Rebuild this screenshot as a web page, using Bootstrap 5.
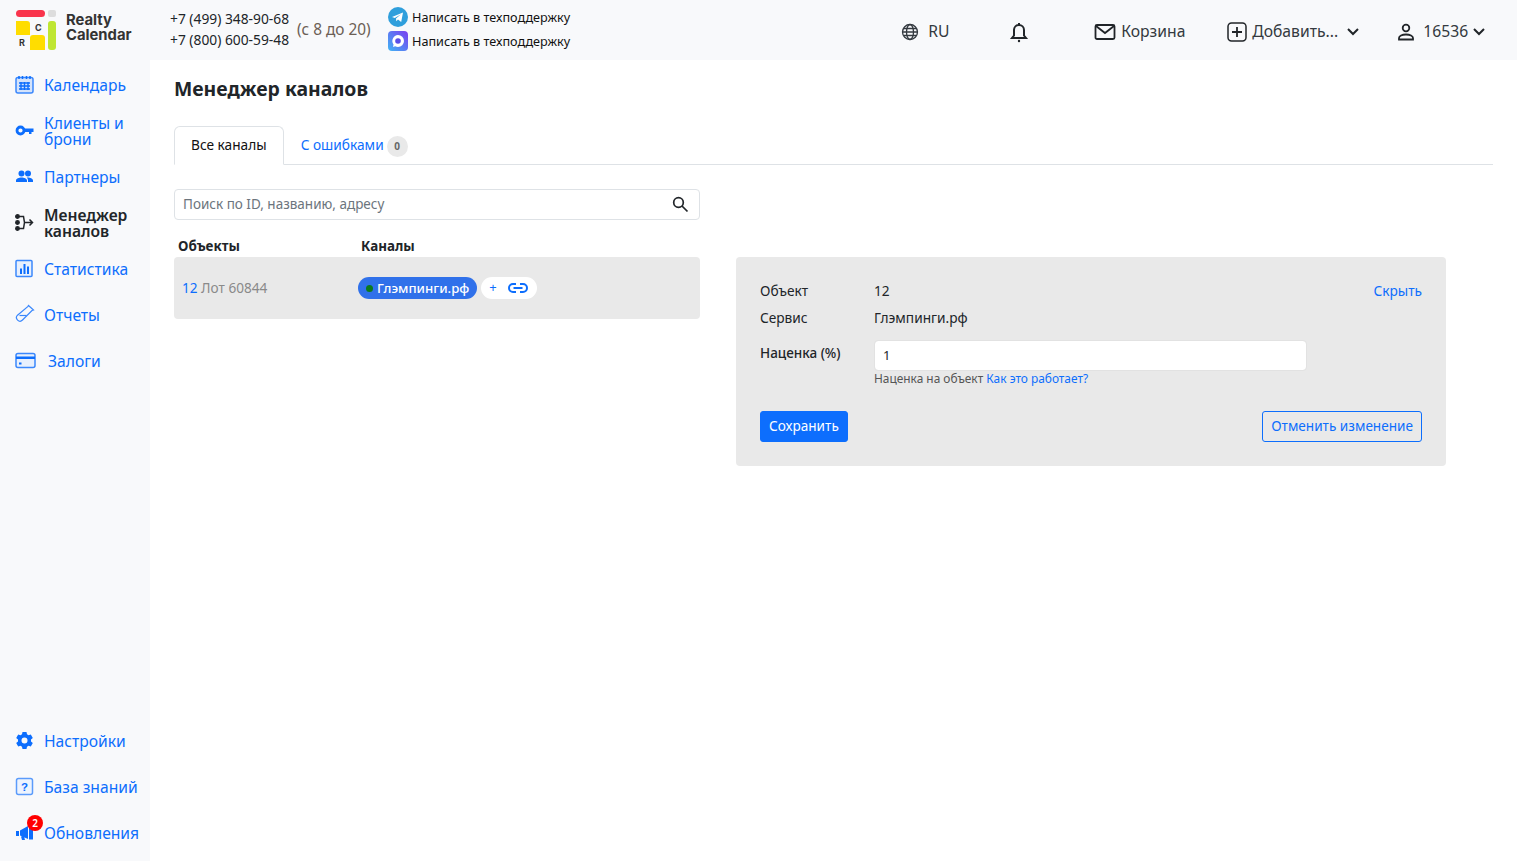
<!DOCTYPE html>
<html lang="ru">
  <head>
    <meta charset="UTF-8" />
    <meta name="viewport" content="width=device-width, initial-scale=1.0" />
    <title>Менеджер каналов</title>
    <link href="https://cdn.jsdelivr.net/npm/bootstrap@5.3.3/dist/css/bootstrap.min.css" rel="stylesheet" crossorigin="anonymous" />
    <style>
      html, body { height: 100%; }
      body { font-family: "Noto Sans", sans-serif; font-size: 14px; color: #212529; height: 861px; overflow: hidden; }
      a { text-decoration: none; }

      .top-bar { height: 60px; background: #f8f9fb; padding-left: 15px; }
      .logo-text { font-family: "Inter", sans-serif; font-weight: 700; font-size: 14.8px; line-height: 15px; color: #333; margin: 0 0 5px 10px; width: 104px; }
      .phones { font-size: 13.8px; line-height: 21px; color: #212529; white-space: nowrap; width: 119px; margin-bottom: 2px; }
      .work-time { font-size: 15.4px; color: #6c5f55; margin-left: 8px; width: 91px; }
      .support { font-size: 12.65px; line-height: 24px; color: #111; white-space: nowrap; margin-bottom: 2px; }
      .support svg { margin-right: 4px; }
      .top-item { position: absolute; top: 2px; height: 60px; display: flex; align-items: center; font-size: 15.7px; color: #343a40; white-space: nowrap; }
      .top-holder { position: relative; flex-grow: 1; height: 60px; }

      .side-bar { width: 150px; height: 801px; background: #f8f9fb; padding: 1.5px 0 5.5px; flex-shrink: 0; }
      .side-link { height: 46px; display: flex; align-items: center; padding-left: 15px; color: #0d6efd; font-size: 15.65px; line-height: 16px; position: relative; white-space: nowrap; }
      .side-link svg { width: 19px; height: 19px; flex-shrink: 0; margin-right: 10px; }
      .side-link.active-link { color: #212529; font-weight: 600; }
      .deposit-link svg { width: 21px; margin-right: 12px; }
      .alert-count { position: absolute; left: 27px; top: 5px; width: 16px; height: 16px; border-radius: 50%; background: #f00; color: #fff; font-size: 10px; font-weight: 600; line-height: 16px; text-align: center; }

      .main-area { padding: 0 24px; min-width: 0; }
      .page-title { font-size: 19.4px; font-weight: 700; line-height: 24px; margin: 17px 0 25px; }
      .nav-tabs .nav-link { font-size: 13.7px; padding: 0 16px; height: 39px; line-height: 36px; }
      .nav-tabs .nav-link.active { color: #111; }
      .error-tab { color: #0d6efd; padding-right: 0 !important; }
      .error-count { display: inline-block; width: 21px; height: 21px; border-radius: 50%; background: #e9e9e9; color: #666; font-size: 10px; font-weight: 700; line-height: 21px; text-align: center; margin-left: 3px; vertical-align: 0; }

      .left-col { width: 526px; flex-shrink: 0; }
      .search-box { height: 31px; margin-top: 24px; }
      .search-box .form-control { height: 31px; font-size: 13.5px; padding: 0 40px 2px 8px; border-radius: 4px; }
      .search-box .form-control::placeholder { color: #6c757d; opacity: 1; }
      .search-box svg { position: absolute; right: 11px; top: 7px; }
      .col-heads { height: 37px; font-size: 13.4px; font-weight: 700; line-height: 16px; padding: 18px 0 0 4px; color: #212529; }
      .col-heads span:first-child { width: 183px; }
      .object-row { height: 62px; background: #e9e9e9; border-radius: 4px; padding-left: 8px; font-size: 13.6px; color: #8a8a8a; }
      .object-cell { width: 176px; }
      .channel-pill { height: 22px; border-radius: 11px; background: #3071ea; color: #fff; font-size: 13.2px; font-weight: 500; padding: 0 8px; line-height: 22px; }
      .green-dot { width: 7px; height: 7px; border-radius: 50%; background: #0b7a1c; margin-right: 4px; }
      .add-pill { height: 22px; width: 56px; border-radius: 11px; background: #fff; color: #0d6efd; margin-left: 4px; padding-left: 8px; font-size: 13px; }
      .add-pill svg { margin-left: 11px; }

      .edit-panel { width: 710px; height: 209px; margin: 92px 0 0 36px; background: #e9e9e9; border-radius: 4px; padding: 24px; font-size: 13.7px; position: relative; }
      .field-row { min-height: 27px; line-height: 20px; }
      .markup-row { margin-top: 5px; }
      .field-label { width: 114px; flex-shrink: 0; }
      .markup-row .field-label { margin-top: 3px; font-size: 13.5px; }
      .hide-link { position: absolute; right: 24px; top: 24px; line-height: 20px; }
      .edit-panel .form-control { width: 433px; height: 31px; font-size: 13px; padding: 0 8px 2px; border-radius: 4px; border-color: #e2e2e2; }
      .hint-text { font-size: 11.9px; line-height: 14px; color: #555; margin: 0 0 0 114px; }
      .panel-buttons { margin-top: 26px; }
      .panel-buttons .btn { height: 31px; font-size: 13.6px; padding: 0 8px 2px; border-radius: 3px; line-height: 27px; }
    </style>
  </head>
  <body>
    <header class="top-bar d-flex align-items-center">
      <svg width="41" height="40" viewBox="0 8 41 40" class="flex-shrink-0">
        <rect x="1" y="8" width="29" height="7" rx="3.500" fill="#f9344c" />
        <rect x="33" y="8" width="8" height="7" rx="2" fill="#ddd" />
        <path d="M1 19h11a3 3 0 0 1 3 3v11H1z" fill="#ffdd00" />
        <path d="M15 48V36a3 3 0 0 1 3-3h9a3 3 0 0 1 3 3v12z" fill="#ffdd00" />
        <rect x="33" y="19" width="8" height="29" rx="3" fill="#bfe632" />
        <text x="20" y="29" font-family="Inter, sans-serif" font-size="9" font-weight="700" fill="#333">C</text>
        <text x="4" y="44" font-family="Inter, sans-serif" font-size="9" font-weight="700" fill="#333">R</text>
      </svg>
      <div class="logo-text">Realty<br />Calendar</div>
      <div class="phones">+7 (499) 348-90-68<br />+7 (800) 600-59-48</div>
      <div class="work-time">(с 8 до 20)</div>
      <div class="support">
        <div class="d-flex align-items-center">
          <svg width="20" height="20" viewBox="0 0 20 20"><circle cx="10" cy="10" r="10" fill="#2f9fdc" /><path d="M4 10l11-4.500-1.800 9.500-3.200-2.400-1.700 1.600-.3-2.700 5-4.300-6.200 3.700z" fill="#fff" /></svg>Написать в техподдержку
        </div>
        <div class="d-flex align-items-center">
          <svg width="20" height="20" viewBox="0 0 20 20"><defs><linearGradient id="maxGrad" x1="0" y1="1" x2="1" y2="0"><stop offset="0" stop-color="#3fb5f5" /><stop offset="1" stop-color="#7b3cf0" /></linearGradient></defs><rect width="20" height="20" rx="4" fill="url(#maxGrad)" /><path d="M10 4a6 6 0 0 1 0 12c-1 0-2-.3-2.800-.8L5 16l.5-2.500A6 6 0 0 1 10 4z" fill="#fff" /><circle cx="10" cy="10" r="2.800" fill="#5a4de8" /></svg>Написать в техподдержку
        </div>
      </div>
      <div class="top-holder">
        <div class="top-item" style="left: 331px">
          <svg width="18" height="18" viewBox="0 0 18 18" fill="none" stroke="#343a40" stroke-width="1.300" style="margin-right: 9px"><circle cx="9" cy="9" r="7.500" /><ellipse cx="9" cy="9" rx="3.500" ry="7.500" /><path d="M1.500 9h15M2.500 5.500h13M2.500 12.500h13" /></svg>RU
        </div>
        <div class="top-item" style="left: 439px">
          <svg width="20" height="22" viewBox="0 0 20 22" fill="none" stroke="#212529" stroke-width="2"><path d="M3 17h14l-2-2.500V9a5 5 0 0 0-10 0v5.500z" /><path d="M10 2v2" /><circle cx="10" cy="20" r="1.200" fill="#212529" stroke="none" /></svg>
        </div>
        <div class="top-item" style="left: 524px">
          <svg width="22" height="18" viewBox="0 0 22 18" fill="none" stroke="#212529" stroke-width="1.800" style="margin-right: 5px"><rect x="1.500" y="2" width="19" height="14" rx="1.500" /><path d="M2 3l9 7 9-7" /></svg>Корзина
        </div>
        <div class="top-item" style="left: 657px">
          <svg width="20" height="20" viewBox="0 0 20 20" fill="none" stroke="#212529" stroke-width="1.500" style="margin-right: 5px"><rect x="1" y="1" width="18" height="18" rx="3.500" /><path d="M10 5v10M5 10h10" stroke-width="1.800" /></svg>Добавить...
          <svg class="ms-2" width="14" height="10" viewBox="0 0 14 10" fill="none" stroke="#212529" stroke-width="2"><path d="M2 2l5 5 5-5" /></svg>
        </div>
        <div class="top-item" style="left: 827px">
          <svg class="me-2" width="18" height="18" viewBox="0 0 18 18" fill="none" stroke="#212529" stroke-width="1.800"><circle cx="9" cy="5" r="3.300" /><path d="M2 16.500v-1.500c0-2 3-3.500 7-3.500s7 1.500 7 3.500v1.500z" /></svg>16536
          <svg class="ms-1" width="14" height="10" viewBox="0 0 14 10" fill="none" stroke="#212529" stroke-width="2"><path d="M2 2l5 5 5-5" /></svg>
        </div>
      </div>
    </header>

    <div class="d-flex">
      <aside class="side-bar d-flex flex-column justify-content-between">
        <nav>
          <a class="side-link" href="#">
            <svg viewBox="0 0 19 19"><rect x="1" y="2.500" width="17" height="15.500" rx="2" fill="#d4e3fb" stroke="#3b88fc" stroke-width="1.500" /><path d="M4 1v3M7.500 1v3M11.500 1v3M15 1v3" stroke="#0d6efd" stroke-width="1.500" /><path d="M4 8h11M4 11h11M4 14h11M6 7v8M9.500 7v8M13 7v8" stroke="#0d6efd" stroke-width="1.400" /></svg>Календарь
          </a>
          <a class="side-link" href="#">
            <svg viewBox="0 0 19 19"><circle cx="5.500" cy="9.500" r="3.500" fill="none" stroke="#0d6efd" stroke-width="2.800" /><path d="M9 7.500h9.500v3.500h-2v2h-2.500v-2H9z" fill="#0d6efd" /></svg>Клиенты и<br />брони
          </a>
          <a class="side-link" href="#">
            <svg viewBox="0 0 19 19"><circle cx="6.500" cy="6.500" r="3" fill="#0d6efd" /><circle cx="13" cy="6.500" r="3" fill="#0d6efd" /><path d="M1 15v-1.500C1 11.500 4 10.500 6.500 10.500S12 11.500 12 13.500V15zM13 15v-1.500c0-1.200-.5-2.200-1.300-3 .5-.1 1-.1 1.300-.1 2 0 5 1 5 3v1.600z" fill="#0d6efd" /></svg>Партнеры
          </a>
          <a class="side-link active-link" href="#">
            <svg viewBox="0 0 19 19" fill="none" stroke="#212529" stroke-width="1.500"><circle cx="2.500" cy="3.500" r="1.700" fill="#212529" /><circle cx="2.500" cy="9.500" r="1.700" fill="#212529" /><circle cx="2.500" cy="15.500" r="1.700" fill="#212529" /><path d="M4 3.500h4.500l1 6h8M4 15.500h4.500l1-6M14.500 6.500l3 3-3 3" /></svg>Менеджер<br />каналов
          </a>
          <a class="side-link" href="#">
            <svg viewBox="0 0 19 19"><rect x="1" y="1.500" width="16" height="16" rx="1" fill="#e8f0fd" stroke="#3b88fc" stroke-width="1.500" /><path d="M5 9.500h2v5.500H5zM8.500 5h2v10h-2zM12 7.500h2V15h-2z" fill="#0d6efd" /></svg>Статистика
          </a>
          <a class="side-link" href="#">
            <svg viewBox="0 0 19 19" fill="none" stroke="#3b88fc" stroke-width="1.200" style="overflow: visible"><path d="M13.500 .5l5 4.500-1.500.5-9.500 9.500a3.400 3.400 0 0 1-5-4.800l10.500-8.800z" /><path d="M4.500 10.500h7" /></svg>Отчеты
          </a>
          <a class="side-link deposit-link" href="#">
            <svg viewBox="0 0 21 19"><rect x="1" y="2.500" width="19" height="14" rx="2" fill="#e8f0fd" stroke="#3b88fc" stroke-width="1.500" /><path d="M1 5.500h19V8H1z" fill="#0d6efd" /><path d="M4 12.500h2.500" stroke="#0d6efd" stroke-width="2" /></svg>Залоги
          </a>
        </nav>
        <nav>
          <a class="side-link" href="#">
            <svg viewBox="0 0 19 19"><path fill="#0d6efd" fill-rule="evenodd" d="M7.500 1h4l.5 2.300 1.500.9 2.300-.7 2 3.500-1.800 1.600v1.800l1.800 1.600-2 3.500-2.300-.7-1.500.9-.5 2.300h-4l-.5-2.300-1.500-.9-2.300.7-2-3.500L3 10.400V8.600L1.200 7l2-3.500 2.300.7L7 3.300zM9.500 6.500a3 3 0 1 0 0 6 3 3 0 0 0 0-6z" /></svg>Настройки
          </a>
          <a class="side-link" href="#">
            <svg viewBox="0 0 19 19"><rect x="1.500" y="1.500" width="16" height="16" rx="2" fill="#eef4fe" stroke="#5b9bfb" stroke-width="1.500" /><text x="9.500" y="14" text-anchor="middle" font-family="Liberation Sans, sans-serif" font-size="11.500" font-weight="700" fill="#0d6efd">?</text></svg>База знаний
          </a>
          <a class="side-link" href="#">
            <svg viewBox="0 0 19 19"><path d="M1 8h3v5H1zM5 7.500L13 3v13L5 12.500zM14 2.500h4v14h-4zM6 13.500h3l1 3.500H7z" fill="#0d6efd" /></svg>Обновления
            <span class="alert-count">2</span>
          </a>
        </nav>
      </aside>

      <main class="main-area flex-grow-1">
        <h1 class="page-title">Менеджер каналов</h1>
        <ul class="nav nav-tabs">
          <li class="nav-item"><a class="nav-link active" href="#">Все каналы</a></li>
          <li class="nav-item"><a class="nav-link error-tab" href="#">С ошибками<span class="error-count">0</span></a></li>
        </ul>
        <div class="d-flex">
          <div class="left-col">
            <div class="search-box position-relative">
              <input class="form-control" type="text" placeholder="Поиск по ID, названию, адресу" />
              <svg width="17" height="17" viewBox="0 0 17 17" fill="none" stroke="#212529" stroke-width="1.700"><circle cx="6.500" cy="6.500" r="4.800" /><path d="M10 10l5.500 5.500" /></svg>
            </div>
            <div class="col-heads d-flex"><span>Объекты</span><span>Каналы</span></div>
            <div class="object-row d-flex align-items-center">
              <div class="object-cell"><a href="#">12</a> Лот 60844</div>
              <div class="channel-pill d-flex align-items-center"><span class="green-dot"></span>Глэмпинги.рф</div>
              <div class="add-pill d-flex align-items-center">+
                <svg width="20" height="12" viewBox="0 0 20 12" fill="none" stroke="#0d6efd" stroke-width="2"><path d="M8 2H5a4 4 0 0 0 0 8h3M12 2h3a4 4 0 0 1 0 8h-3M5.500 6h9" /></svg>
              </div>
            </div>
          </div>
          <section class="edit-panel">
            <a class="hide-link" href="#">Скрыть</a>
            <div class="field-row d-flex"><span class="field-label">Объект</span><span>12</span></div>
            <div class="field-row d-flex"><span class="field-label">Сервис</span><span>Глэмпинги.рф</span></div>
            <div class="field-row markup-row d-flex">
              <span class="field-label fw-medium">Наценка (%)</span>
              <input class="form-control" type="text" value="1" />
            </div>
            <div class="hint-text">Наценка на объект <a href="#">Как это работает?</a></div>
            <div class="panel-buttons d-flex justify-content-between">
              <button class="btn btn-primary" type="button">Сохранить</button>
              <button class="btn btn-outline-primary" type="button">Отменить изменение</button>
            </div>
          </section>
        </div>
      </main>
    </div>
    <script src="https://cdn.jsdelivr.net/npm/bootstrap@5.3.3/dist/js/bootstrap.bundle.min.js" crossorigin="anonymous"></script>
  </body>
</html>
